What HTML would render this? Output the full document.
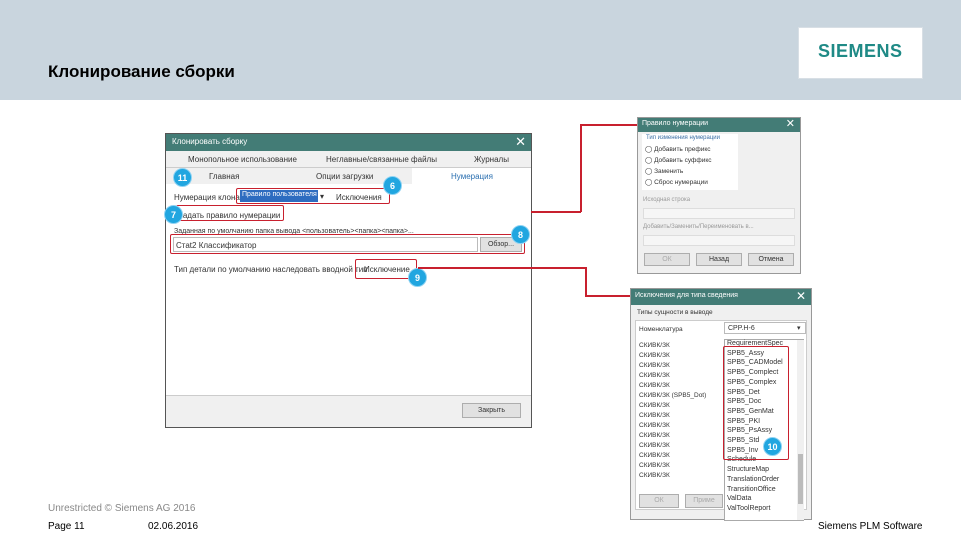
<!DOCTYPE html>
<html><head><meta charset="utf-8"><style>
*{margin:0;padding:0;box-sizing:border-box}
body{width:961px;height:540px;position:relative;background:#fff;font-family:"Liberation Sans",sans-serif;overflow:hidden}
.a{position:absolute}
.t{font-size:8px;color:#333;white-space:nowrap}
.tb{background:#437c76;color:#fff;font-size:8px;padding:3px 6px}
.x{position:absolute;right:5px;top:0;font-size:13px;color:#fff}
.red{position:absolute;border:1.5px solid #c8202e;border-radius:2px}
.bad{position:absolute;width:19px;height:19px;border-radius:50%;background:#21a6e0;color:#fff;font-size:9px;font-weight:bold;text-align:center;line-height:19px;border:1px solid #8fd3f3}
.ln{position:absolute;background:#c8202e}
.btn{position:absolute;background:#e1e1e1;border:1px solid #adadad;font-size:7px;color:#333;text-align:center}
</style></head><body>
<div class="a" style="left:0;top:0;width:961px;height:100px;background:#c9d5de"></div>
<div class="a" style="left:48px;top:62px;font-size:17px;font-weight:bold;color:#000">Клонирование сборки</div>
<div class="a" style="left:798px;top:27px;width:125px;height:52px;background:#fff;border:1px solid #d8dfe5"></div>
<div class="a" style="left:818px;top:41px;font-size:18px;font-weight:bold;color:#1f8a86;letter-spacing:0.5px">SIEMENS</div>

<!-- main dialog -->
<div class="a" style="left:165px;top:133px;width:367px;height:295px;border:1px solid #555;background:#fff">
 <div class="tb" style="height:17px">Клонировать сборку<span class="x">✕</span></div>
 <div class="a" style="left:0;top:17px;width:365px;height:33px;background:#f0f0f0"></div>
 <div class="a t" style="left:22px;top:21px">Монопольное использование</div>
 <div class="a t" style="left:160px;top:21px">Неглавные/связанные файлы</div>
 <div class="a t" style="left:308px;top:21px">Журналы</div>
 <div class="a" style="left:0;top:33px;width:365px;height:1px;background:#ccc"></div>
 <div class="a t" style="left:43px;top:38px">Главная</div>
 <div class="a t" style="left:150px;top:38px">Опции загрузки</div>
 <div class="a" style="left:246px;top:34px;width:119px;height:17px;background:#fff"></div>
 <div class="a t" style="left:285px;top:38px;color:#2a6fb0">Нумерация</div>
 <div class="a t" style="left:8px;top:59px">Нумерация клона</div>
 <div class="a" style="left:74px;top:56px;width:78px;height:12px;background:#2d6cc0;color:#fff;font-size:7px;padding:1px 2px;white-space:nowrap;overflow:hidden">Правило пользователя</div>
 <div class="a t" style="left:154px;top:58px">▾</div>
 <div class="a t" style="left:170px;top:59px">Исключения</div>
 <div class="a t" style="left:12px;top:77px">Задать правило нумерации</div>
 <div class="a t" style="left:8px;top:94px;font-size:7px">Заданная по умолчанию папка вывода &lt;пользователь&gt;&lt;папка&gt;&lt;папка&gt;...</div>
 <div class="a" style="left:7px;top:103px;width:305px;height:15px;border:1px solid #bbb"></div>
 <div class="a t" style="left:10px;top:107px">Стаt2 Классификатор</div>
 <div class="btn" style="left:314px;top:103px;width:42px;height:15px;line-height:13px">Обзор...</div>
 <div class="a t" style="left:8px;top:131px">Тип детали по умолчанию наследовать вводной тип</div>
 <div class="a t" style="left:198px;top:131px">Исключение</div>
 <div class="a" style="left:0;top:261px;width:365px;height:32px;background:#f0f0f0;border-top:1px solid #ccc"></div>
 <div class="btn" style="left:296px;top:269px;width:59px;height:15px;line-height:13px">Закрыть</div>
</div>
<div class="red" style="left:236px;top:188px;width:154px;height:16px"></div>
<div class="red" style="left:176px;top:205px;width:108px;height:16px"></div>
<div class="red" style="left:170px;top:234px;width:355px;height:20px"></div>
<div class="red" style="left:355px;top:259px;width:62px;height:20px"></div>
<div class="bad" style="left:173px;top:168px">11</div>
<div class="bad" style="left:383px;top:176px">6</div>
<div class="bad" style="left:164px;top:205px">7</div>
<div class="bad" style="left:511px;top:225px">8</div>
<div class="bad" style="left:408px;top:268px">9</div>

<!-- lines -->
<div class="ln" style="left:531px;top:211px;width:50px;height:1.5px"></div>
<div class="ln" style="left:580px;top:124px;width:1.5px;height:88px"></div>
<div class="ln" style="left:580px;top:124px;width:57px;height:1.5px"></div>
<div class="ln" style="left:418px;top:267px;width:168px;height:1.5px"></div>
<div class="ln" style="left:585px;top:267px;width:1.5px;height:29px"></div>
<div class="ln" style="left:585px;top:295px;width:45px;height:1.5px"></div>

<!-- dialog 2 -->
<div class="a" style="left:637px;top:117px;width:164px;height:157px;border:1px solid #999;background:#f0f0f0">
 <div class="tb" style="height:14px;padding:2px 4px;font-size:7px">Правило нумерации<span class="x" style="font-size:11px;top:-1px">✕</span></div>
 <div class="a" style="left:4px;top:16px;width:96px;height:56px;background:#fff"></div>
 <div class="a t" style="left:8px;top:17px;font-size:6px;color:#3a6ea5">Тип изменения нумерации</div>
 <div class="a t" style="left:7px;top:27px;font-size:6.5px">◯ Добавить префикс</div>
 <div class="a t" style="left:7px;top:38px;font-size:6.5px">◯ Добавить суффикс</div>
 <div class="a t" style="left:7px;top:49px;font-size:6.5px">◯ Заменить</div>
 <div class="a t" style="left:7px;top:60px;font-size:6.5px">◯ Сброс нумерации</div>
 <div class="a t" style="left:5px;top:79px;font-size:6px;color:#999">Исходная строка</div>
 <div class="a" style="left:5px;top:90px;width:152px;height:11px;border:1px solid #ddd;background:#f6f6f6"></div>
 <div class="a t" style="left:5px;top:106px;font-size:6px;color:#999">Добавить/Заменить/Переименовать в...</div>
 <div class="a" style="left:5px;top:117px;width:152px;height:11px;border:1px solid #ddd;background:#f6f6f6"></div>
 <div class="btn" style="left:6px;top:135px;width:46px;height:13px;line-height:11px;color:#aaa">ОК</div>
 <div class="btn" style="left:58px;top:135px;width:46px;height:13px;line-height:11px">Назад</div>
 <div class="btn" style="left:110px;top:135px;width:46px;height:13px;line-height:11px">Отмена</div>
</div>

<!-- dialog 3 -->
<div class="a" style="left:630px;top:288px;width:182px;height:232px;border:1px solid #999;background:#f0f0f0">
 <div class="tb" style="height:16px;padding:3px 4px;font-size:7px">Исключения для типа сведения<span class="x" style="font-size:12px;top:0">✕</span></div>
 <div class="a t" style="left:6px;top:20px;font-size:6.5px">Типы сущности в выводе</div>
 <div class="a" style="left:4px;top:31px;width:172px;height:190px;background:#fff;border:1px solid #ccc"></div>
 <div class="a t" style="left:8px;top:37px;font-size:6.5px">Номенклатура</div>
 <div class="a" style="left:93px;top:33px;width:82px;height:12px;border:1px solid #bbb;background:#fff"></div>
 <div class="a t" style="left:97px;top:36px;font-size:7px">CPP.H-6</div>
 <div class="a t" style="left:166px;top:35px;font-size:7px">▾</div>
 <div class="a t" style="left:8px;top:52px;font-size:6.5px;line-height:10px">СКИВК/ЗК<br>СКИВК/ЗК<br>СКИВК/ЗК<br>СКИВК/ЗК<br>СКИВК/ЗК<br>СКИВК/ЗК (SPB5_Dot)<br>СКИВК/ЗК<br>СКИВК/ЗК<br>СКИВК/ЗК<br>СКИВК/ЗК<br>СКИВК/ЗК<br>СКИВК/ЗК<br>СКИВК/ЗК<br>СКИВК/ЗК</div>
 <div class="a" style="left:93px;top:50px;width:80px;height:182px;background:#fff;border:1px solid #aaa"></div>
 <div class="a t" style="left:96px;top:50px;font-size:7px;line-height:9.7px">RequirementSpec<br>SPB5_Assy<br>SPB5_CADModel<br>SPB5_Complect<br>SPB5_Complex<br>SPB5_Det<br>SPB5_Doc<br>SPB5_GenMat<br>SPB5_PKI<br>SPB5_PsAssy<br>SPB5_Std<br>SPB5_Inv<br>Schedule<br>StructureMap<br>TranslationOrder<br>TransitionOffice<br>ValData<br>ValToolReport</div>
 <div class="a" style="left:166px;top:51px;width:7px;height:180px;background:#f0f0f0"></div>
 <div class="a" style="left:167px;top:165px;width:5px;height:50px;background:#bbb"></div>
 <div class="btn" style="left:8px;top:205px;width:40px;height:14px;line-height:12px;color:#aaa">ОК</div>
 <div class="btn" style="left:54px;top:205px;width:38px;height:14px;line-height:12px;color:#aaa">Приме</div>
</div>
<div class="red" style="left:723px;top:346px;width:66px;height:114px"></div>
<div class="bad" style="left:763px;top:437px">10</div>

<div class="a" style="left:48px;top:503px;font-size:10px;color:#888">Unrestricted © Siemens AG 2016</div>
<div class="a" style="left:48px;top:521px;font-size:10px;color:#000">Page 11</div>
<div class="a" style="left:148px;top:521px;font-size:10px;color:#000">02.06.2016</div>
<div class="a" style="left:818px;top:521px;font-size:10px;color:#000">Siemens PLM Software</div>
</body></html>
